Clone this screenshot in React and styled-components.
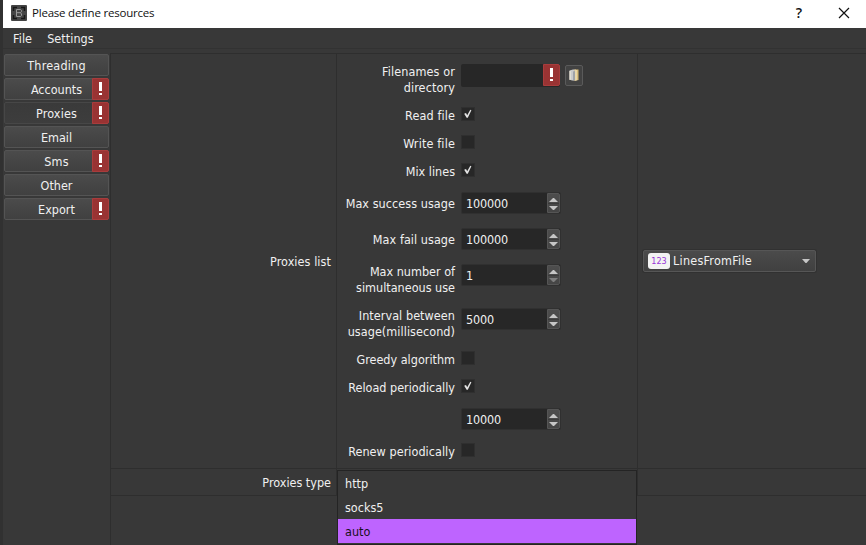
import React from "react";
import styled, { createGlobalStyle } from "styled-components";

const Global = createGlobalStyle`
  *, *::before, *::after { box-sizing: border-box; }
  body {
    margin: 0;
    background: #383838;
    color: #f0f0f0;
    font: 12.5px/16px "DejaVu Sans Condensed", "DejaVu Sans", sans-serif;
    font-stretch: condensed;
  }
`;

const Window = styled.div`
  width: 866px;
  height: 545px;
  display: flex;
  flex-direction: column;
  overflow: hidden;
  border-left: 3px solid #313131;
  background: #383838;
`;

const TitleBar = styled.header`
  height: 28px;
  flex: none;
  display: flex;
  align-items: center;
  padding: 0 15px 2px 8px;
  background: #fff;
  color: #111;
  font-family: "Open Sans", "Noto Sans", sans-serif;
  font-size: 12px;
  font-stretch: normal;
`;

const Title = styled.h1`
  flex: 1;
  margin: 0 0 0 5px;
  font-size: 11.5px;
  font-weight: 400;
  letter-spacing: -0.21px;
`;

const WindowButton = styled.span`
  width: 14px;
  display: flex;
  justify-content: center;
  margin-left: 31px;
  font-size: 14px;
  font-weight: 600;
`;

const MenuBar = styled.nav`
  height: 21px;
  flex: none;
  display: flex;
  gap: 15px;
  padding: 3px 0 0 10px;
  border-bottom: 1px solid #323232;
`;

const Text = styled.span`
  white-space: nowrap;
  letter-spacing: ${(p) => p.$spacing || 0}px;
`;

const Body = styled.div`
  flex: 1;
  display: flex;
  margin-top: 4px;
`;

const Sidebar = styled.aside`
  width: 107px;
  display: flex;
  flex-direction: column;
  gap: 2px;
  padding: 1px 1px 0;
`;

const TabButton = styled.button`
  height: 22px;
  width: 105px;
  display: flex;
  align-items: stretch;
  padding: 0;
  border: 1px solid #545454;
  border-radius: 2px;
  background: ${(p) => (p.$active ? "linear-gradient(#3a3a3a, #3d3d3d)" : "linear-gradient(#4b4b4b, #404040)")};
  border-color: ${(p) => (p.$active ? "#474747" : "#545454")};
  color: inherit;
  font: inherit;
  position: relative;
`;

const TabLabel = styled.span`
  flex: 1;
  line-height: 21px;
  text-align: center;
  letter-spacing: ${(p) => p.$spacing || 0}px;
`;

const TabAlert = styled.span`
  position: absolute;
  right: -1px;
  top: -1px;
`;

const AlertBox = styled.span`
  width: 17px;
  height: 22px;
  display: flex;
  align-items: center;
  justify-content: center;
  background: #993333;
  border: 1px solid #a93c3c;
  border-radius: 0 2px 2px 0;
`;

const Table = styled.main`
  flex: 1;
  display: grid;
  grid-template-columns: 226px 301px 1fr;
  grid-template-rows: 415px 27px 1fr;
  border-left: 1px solid #2e2e2e;
  border-top: 1px solid #2e2e2e;
`;

const Cell = styled.section`
  border-right: ${(p) => (p.$last ? "0" : "1px solid #2e2e2e")};
  border-bottom: 1px solid #2e2e2e;
  display: flex;
  align-items: center;
  justify-content: ${(p) => (p.$label ? "flex-end" : "flex-start")};
  padding: ${(p) => (p.$label ? "1px 5px 0 0" : "0 0 0 5px")};
  position: relative;
`;

const FormCell = styled(Cell)`
  align-items: stretch;
  padding: 8px 0 0;
`;

const Form = styled.div`
  flex: 1;
  display: flex;
  flex-direction: column;
`;

const FormRow = styled.div`
  height: ${(p) => p.$height}px;
  display: grid;
  grid-template-columns: 118px 1fr;
  column-gap: 6px;
  align-items: start;
`;

const FormLabel = styled.label`
  display: flex;
  flex-direction: column;
  align-items: flex-end;
  padding-top: ${(p) => p.$offset}px;
`;

const Control = styled.div`
  display: flex;
  padding-top: ${(p) => p.$offset}px;
`;

const CheckBox = styled.span`
  width: 14px;
  height: 14px;
  background: #272727;
  border: 1px solid #2f2f2f;
  display: flex;
`;

const SpinBox = styled.span`
  width: 100px;
  height: 22px;
  display: flex;
  background: #272727;
  border: 1px solid #303030;
  border-radius: 2px;
`;

const SpinValue = styled.span`
  flex: 1;
  padding-left: 4px;
  line-height: 21px;
`;

const Stepper = styled.span`
  width: 13px;
  display: flex;
  background: linear-gradient(#4d4d4d, #454545);
  border: 1px solid #555;
  border-radius: 0 2px 2px 0;
`;

const FileField = styled.span`
  width: 99px;
  height: 23px;
  display: flex;
  justify-content: flex-end;
  background: #272727;
  border-radius: 2px;
`;

const FolderButton = styled.button`
  width: 18px;
  height: 21px;
  margin: 1px 0 0 5px;
  padding: 0;
  display: flex;
  align-items: center;
  justify-content: center;
  background: #424242;
  border: 1px solid #5a5a5a;
  border-radius: 2px;
`;

const ComboBox = styled.button`
  width: 173px;
  height: 22px;
  display: flex;
  align-items: center;
  padding: 0 4px;
  border: 1px solid #565656;
  border-radius: 2px;
  background: linear-gradient(#4b4b4b, #404040);
  box-shadow: 0 0 0 1px #313131;
  color: inherit;
  font: inherit;
`;

const TypeBadge = styled.span`
  width: 22px;
  height: 16px;
  border-radius: 3px;
  background: #f3f3f3;
  color: #9a35d8;
  font-size: 9px;
  line-height: 17px;
  text-align: center;
`;

const ComboText = styled(Text)`
  flex: 1;
  margin-left: 3px;
  text-align: left;
`;

const Popup = styled.ul`
  position: absolute;
  left: 0;
  top: 1px;
  z-index: 1;
  width: 300px;
  height: 75px;
  margin: 0;
  padding: 0;
  border: 1px solid #242424;
  background: #383838;
  list-style: none;
`;

const Option = styled.li`
  height: 24px;
  padding-left: 7px;
  line-height: 25px;
  background: ${(p) => (p.$selected ? "#be64ff" : "transparent")};
  color: ${(p) => (p.$selected ? "#181020" : "inherit")};
`;

const Alert = () => (
  <AlertBox>
    <svg width="5" height="14">
      <path d="M1 0h3v9H1zM1 11h3v2H1z" fill="#fff" />
    </svg>
  </AlertBox>
);

const Spinner = ({ value, atMinimum }) => (
  <SpinBox>
    <SpinValue>
      <Text $spacing={-0.15}>{value}</Text>
    </SpinValue>
    <Stepper>
      <svg width="11" height="18">
        <path d="M1 8 5 4h1l4 4z" fill="#c6c6c6" />
        <path d="M0 9.5h11" stroke="#3b3b3b" />
        <path d="M1 12h9l-4 4H5z" fill={atMinimum ? "#7e7e7e" : "#c6c6c6"} />
      </svg>
    </Stepper>
  </SpinBox>
);

const Check = ({ on }) => (
  <CheckBox>
    {on && (
      <svg width="12" height="12">
        <path d="M2.2 5.8 4 5l1.2 2.3L8.3 1.8 9.4 2.3 5.8 9.8H4.6z" fill="#e4e4e4" />
      </svg>
    )}
  </CheckBox>
);

const FileInput = () => (
  <>
    <FileField>
      <Alert />
    </FileField>
    <FolderButton>
      <svg width="12" height="15">
        <path d="M1.5 2.5 5 1.5h3v11H4l-2.5-1z" fill="#c9cacb" />
        <path d="M6.5 1.5h4V12l-4 1z" fill="#d9bd79" />
        <path d="M5 3.5 7 3v9l-2 .5z" fill="#9fa3a8" />
        <path d="M2 3v9M8 2v10.5" stroke="#f6efdb" />
      </svg>
    </FolderButton>
  </>
);

const tabs = [
  { name: "Threading", spacing: 0.2 },
  { name: "Accounts", alert: true },
  { name: "Proxies", alert: true, spacing: 0.15 },
  { name: "Email" },
  { name: "Sms", alert: true, spacing: 0.2 },
  { name: "Other" },
  { name: "Export", alert: true },
];

const rows = [
  { lines: ["Filenames or", "directory"], spacing: 0.12, height: 45, label: 2, offset: 2, control: <FileInput /> },
  { lines: ["Read file"], spacing: 0.12, height: 28, label: 1, offset: 0, control: <Check on /> },
  { lines: ["Write file"], spacing: 0.15, height: 28, label: 1, offset: 0, control: <Check /> },
  { lines: ["Mix lines"], height: 28, label: 1, offset: 0, control: <Check on /> },
  { lines: ["Max success usage"], spacing: 0.06, height: 36, label: 5, offset: 1, control: <Spinner value="100000" /> },
  { lines: ["Max fail usage"], spacing: 0.05, height: 36, label: 5, offset: 1, control: <Spinner value="100000" /> },
  { lines: ["Max number of", "simultaneous use"], height: 44, label: 1, offset: 1, control: <Spinner value="1" atMinimum /> },
  { lines: ["Interval between", "usage(millisecond)"], spacing: 0.06, height: 44, label: 1, offset: 1, control: <Spinner value="5000" /> },
  { lines: ["Greedy algorithm"], height: 28, label: 1, offset: 0, control: <Check /> },
  { lines: ["Reload periodically"], height: 28, label: 1, offset: 0, control: <Check on /> },
  { lines: [], height: 36, label: 0, offset: 1, control: <Spinner value="10000" /> },
  { lines: ["Renew periodically"], spacing: 0.05, height: 24, label: 1, offset: 0, control: <Check /> },
];

export default function App() {
  return (
    <Window>
      <Global />
      <TitleBar>
        <svg width="16" height="16">
          <rect width="16" height="16" rx="1" fill="#444" />
          <path d="M2.5 6V2.5H6M10 2.5h3.5V6M13.5 10v3.5H10M6 13.5H2.5V10" fill="none" stroke="#161616" strokeWidth="1.5" />
          <path d="M5.5 4.5h4l1 1v1l-1 1.2 1 1.3v1.5l-1 1h-4zM5.5 7.7h4" fill="none" stroke="#9a9a9a" />
        </svg>
        <Title>Please define resources</Title>
        <WindowButton>?</WindowButton>
        <WindowButton>
          <svg width="12" height="12">
            <path d="m1 1 10 10M11 1 1 11" stroke="#111" strokeWidth="1.2" />
          </svg>
        </WindowButton>
      </TitleBar>
      <MenuBar>
        <Text $spacing={0.1}>File</Text>
        <Text $spacing={0.05}>Settings</Text>
      </MenuBar>
      <Body>
        <Sidebar>
          {tabs.map(({ name, alert, spacing }) => (
            <TabButton key={name} $active={name === "Proxies"}>
              <TabLabel $spacing={spacing}>{name}</TabLabel>
              {alert && (
                <TabAlert>
                  <Alert />
                </TabAlert>
              )}
            </TabButton>
          ))}
        </Sidebar>
        <Table>
          <Cell $label>
            <Text $spacing={0.08}>Proxies list</Text>
          </Cell>
          <FormCell>
            <Form>
              {rows.map((row, i) => (
                <FormRow key={i} $height={row.height}>
                  <FormLabel $offset={row.label}>
                    {row.lines.map((line) => (
                      <Text key={line} $spacing={row.spacing}>{line}</Text>
                    ))}
                  </FormLabel>
                  <Control $offset={row.offset}>{row.control}</Control>
                </FormRow>
              ))}
            </Form>
          </FormCell>
          <Cell $last>
            <ComboBox>
              <TypeBadge>123</TypeBadge>
              <ComboText $spacing={0.25}>LinesFromFile</ComboText>
              <svg width="10" height="6">
                <path d="M1 1h8L5.5 5h-1z" fill="#c6c6c6" />
              </svg>
            </ComboBox>
          </Cell>
          <Cell $label>
            <Text>Proxies type</Text>
          </Cell>
          <Cell>
            <Popup>
              <Option>http</Option>
              <Option>socks5</Option>
              <Option $selected>auto</Option>
            </Popup>
          </Cell>
          <Cell $last />
        </Table>
      </Body>
    </Window>
  );
}
